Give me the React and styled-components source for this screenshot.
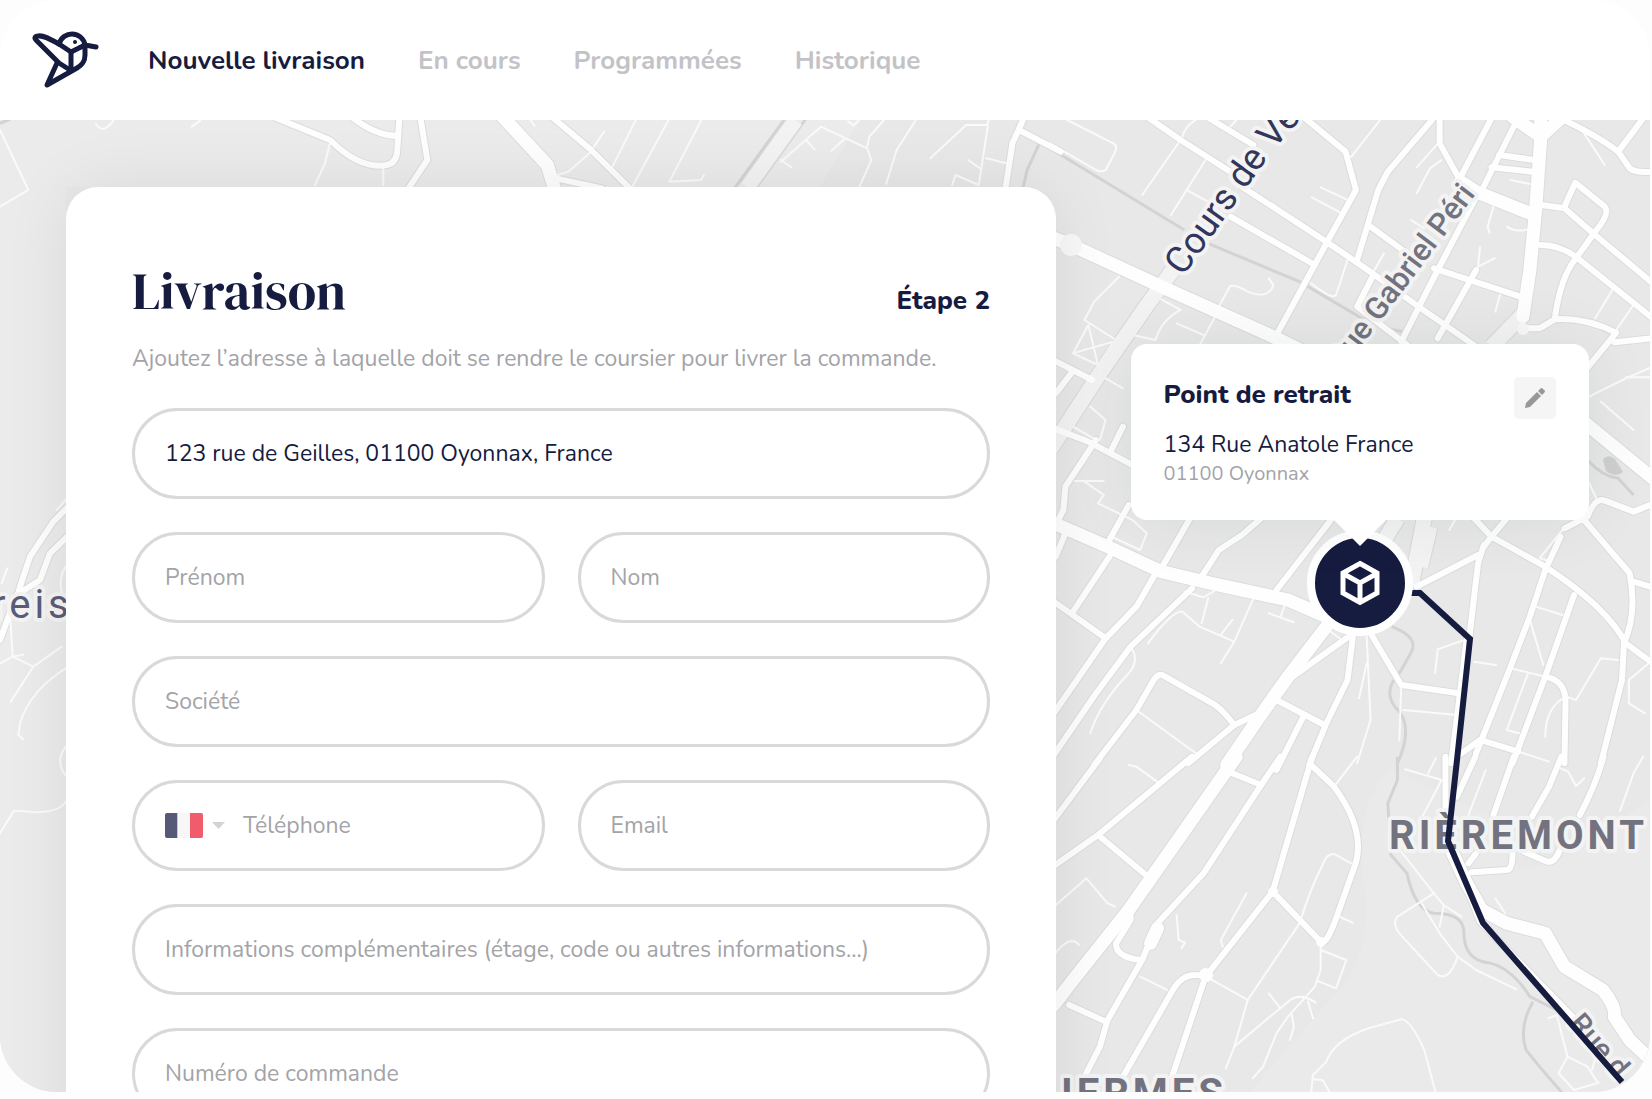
import React from "react";
import styled, { createGlobalStyle } from "styled-components";

const colors = {
  navy: "#161b40",
  muted: "#a3a3a8",
  navMuted: "#c3c3c7",
  border: "#d9d9d9",
  land: "#e8e8e8",
};

const GlobalStyle = createGlobalStyle`
  * {
    box-sizing: border-box;
  }

  body {
    margin: 0;
    background: #fdfdfd;
    color: ${colors.navy};
    font-family: Nunito, Lato, sans-serif;
    overflow: hidden;
  }
`;

const Frame = styled.div`
  display: flex;
  flex-direction: column;
  height: calc(100vh - 7px);
  margin-right: 2px;
  border-radius: 57px;
  background: #fff;
  overflow: hidden;
`;

const Header = styled.header`
  display: flex;
  align-items: center;
  gap: 48px;
  height: 120px;
  flex-shrink: 0;
  padding: 0 32px;
  background: #fff;
`;

const Nav = styled.nav`
  display: flex;
  gap: 53px;
  padding-top: 2px;
`;

const NavLink = styled.a`
  color: ${({ $active }) => ($active ? colors.navy : colors.navMuted)};
  font-size: 26px;
  font-weight: 700;
  line-height: 36px;
  text-decoration: none;
`;

const MapArea = styled.main`
  position: relative;
  flex: 1;
  min-height: 0;
  overflow: hidden;
  background: ${colors.land};
`;

const MapSvg = styled.svg`
  position: absolute;
  inset: 0;
  width: 100%;
  height: 100%;
  font-family: Roboto, sans-serif;
`;

const Card = styled.section`
  position: relative;
  width: 60%;
  margin: 67px 0 0 66px;
  padding: 74px 66px;
  border-radius: 32px 32px 0 0;
  background: #fff;
  box-shadow: 0 0 66px rgba(20, 24, 22, 0.08);
`;

const CardHeader = styled.div`
  display: flex;
  align-items: baseline;
  justify-content: space-between;
`;

const Title = styled.h1`
  margin: 0;
  font-family: "DM Serif Display", "Liberation Serif", serif;
  font-size: 52px;
  font-weight: 400;
  line-height: 60px;
`;

const Step = styled.span`
  font-size: 26px;
  font-weight: 800;
  line-height: 36px;
`;

const Intro = styled.p`
  margin: 20px 0 31px;
  color: ${colors.muted};
  font-size: 23px;
  line-height: 36px;
`;

const Form = styled.form`
  display: grid;
  grid-template-columns: repeat(2, minmax(0, 1fr));
  gap: 33px;
`;

const Field = styled.div`
  display: flex;
  align-items: center;
  gap: 18px;
  grid-column: ${({ $half }) => ($half ? "auto" : "1 / -1")};
  height: 91px;
  padding: 0 30px;
  border: 3px solid ${colors.border};
  border-radius: 46px;
`;

const Input = styled.input`
  flex: 1;
  min-width: 0;
  padding: 0;
  border: 0;
  outline: 0;
  background: transparent;
  color: ${colors.navy};
  font-family: inherit;
  font-size: 23px;
  line-height: 36px;

  &::placeholder {
    color: ${colors.muted};
    opacity: 1;
  }
`;

const CountryPicker = styled.div`
  position: relative;
  display: flex;
  align-items: center;
  gap: 9px;
`;

const CountrySelect = styled.select`
  position: absolute;
  inset: 0;
  width: 100%;
  opacity: 0;
  cursor: pointer;
`;

const PickupPin = styled.div`
  position: absolute;
  left: 82.4%;
  top: 224px;
  display: flex;
  flex-direction: column;
  align-items: center;
  gap: 10px;
  transform: translateX(-50%);
`;

const Popover = styled.article`
  position: relative;
  z-index: 1;
  display: flex;
  align-items: flex-start;
  justify-content: space-between;
  width: 458px;
  height: 176px;
  padding: 33px;
  border-radius: 16px;
  background: #fff;
  box-shadow: 0 0 66px rgba(20, 50, 40, 0.08);

  &::after {
    content: "";
    position: absolute;
    top: 100%;
    left: 50%;
    border: 26px solid transparent;
    border-top-color: #fff;
    border-bottom: 0;
    transform: translateX(-50%);
  }
`;

const PopoverTitle = styled.h2`
  margin: 0 0 16px;
  font-size: 26px;
  font-weight: 800;
  line-height: 36px;
`;

const Street = styled.p`
  margin: 0;
  font-size: 23px;
  line-height: 32px;
`;

const City = styled.p`
  margin: 0;
  color: ${colors.muted};
  font-size: 20px;
  line-height: 26px;
`;

const EditButton = styled.button`
  display: flex;
  align-items: center;
  justify-content: center;
  width: 42px;
  height: 42px;
  padding: 0;
  border: 0;
  border-radius: 5px;
  background: #f5f5f5;
  cursor: pointer;
`;

const Marker = styled.div`
  display: flex;
  align-items: center;
  justify-content: center;
  width: 106px;
  height: 106px;
  border: 8px solid #fff;
  border-radius: 50%;
  background: ${colors.navy};
`;

// Map data. Each tile keeps its own grid; widths are in screen pixels.
const tiles = [
  {
    id: "north-west",
    transform: "scale(.3333)",
    light: [],
    major: [],
    main: [
      "M830 355 L880 375 L990 420 Q1080 510 1160 495 Q1190 490 1192 450 L1198 355",
      "M1060 355 Q1130 408 1195 408",
    ],
    thin: [
      "M0 390 L85 570 L0 620",
      "M288 372 Q310 405 340 362",
      "M575 380 L600 362",
      "M990 430 L975 490 L945 555",
      "M1150 500 V555",
    ],
    rail: ["M0 370 L30 358"],
  },
  {
    id: "north",
    transform: "translate(400 110) scale(.4209 .3333)",
    light: ["M940 30 L825 232"],
    major: ["M240 15 L350 165 L368 240"],
    main: [
      "M48 20 L65 150 L20 235",
      "M360 20 L450 115 L550 240",
      "M370 205 L480 235",
      "M1480 30 L1455 100 L1438 240",
      "M1478 65 L1570 125",
    ],
    thin: [
      "M485 65 L450 130 L400 185 L375 195",
      "M562 25 L505 170",
      "M640 25 L550 235",
      "M718 25 L640 215 L715 210 L722 195",
      "M905 155 L1000 50 L1110 115 L1120 150 L1090 235",
      "M965 90 L985 118 M1058 85 L1025 122 M905 150 L930 172",
      "M1110 110 L1115 80 L1150 30 M1065 35 L1078 46 L1090 32",
      "M1228 25 L1180 120 L1155 222",
      "M1260 145 L1345 45 H1395 L1400 25 M1397 45 L1375 225 L1320 195 L1312 225",
      "M1393 145 L1440 160 M1350 150 L1378 175 M310 30 L320 48",
    ],
    rail: [
      "M915 25 L795 235",
      "M965 25 L845 235",
      "M1570 125 L1520 98 L1490 180 L1480 235",
    ],
  },
  {
    id: "west",
    transform: "translate(0 380) scale(.3333)",
    light: [],
    major: [],
    main: [
      "M210 375 L160 425 L90 530 L60 620 L55 640",
      "M210 462 L150 520 L120 600 L50 645 L0 780",
    ],
    thin: [
      "M22 565 L5 610",
      "M205 350 L170 390",
      "M30 700 L38 830 L0 850",
      "M38 830 L70 824 M38 830 L100 860 L32 965 M100 860 L185 800",
      "M205 860 Q90 930 60 1030 L55 1065 L70 1078",
      "M197 560 Q175 590 185 640",
      "M197 1100 Q160 1150 205 1195",
      "M0 1360 L42 1292 L110 1297 Q180 1295 197 1265",
    ],
    rail: [],
  },
  {
    id: "centre",
    transform: "translate(1050 110) scale(.3839 .3333)",
    light: ["M320 480 L250 590 L130 790 L0 1020", "M1235 610 L1150 710"],
    major: [
      "M0 380 L55 405 L290 530 L600 690 L720 760",
      "M1278 20 V90 L1265 300 L1250 480 L1232 620",
      "M1205 20 L1278 80 L1335 20",
      "M1070 215 L1110 245 L1255 312",
    ],
    main: [
      "M255 22 L340 90 L470 185 L500 230 L720 395 L840 490 L960 590 L1110 710",
      "M415 25 L530 105",
      "M470 320 L690 465",
      "M665 25 L770 125 L797 240 L720 400 L590 675",
      "M995 30 L880 185 L855 240 L800 450",
      "M1015 22 V100 L1070 215",
      "M1150 25 L1070 200",
      "M1210 45 L1125 240",
      "M1170 135 L1260 150 M1150 172 L1255 185",
      "M835 350 L930 430 M1000 475 L1225 560",
      "M1115 250 L1010 480 L915 695",
      "M1110 480 L1010 685",
      "M840 500 L800 590 L930 705",
      "M1330 25 Q1430 80 1480 125 L1510 175 Q1525 190 1570 185",
      "M1545 25 L1480 125",
      "M1280 285 L1340 295 L1420 375 L1570 520",
      "M1340 290 L1368 218 L1445 290 Q1460 310 1420 365 L1370 445 Q1330 500 1315 625",
      "M1278 405 Q1330 405 1375 445 L1570 625",
      "M1230 655 H1275 L1315 628 Q1390 620 1475 668 L1395 780",
      "M1470 697 L1570 685",
      "M0 745 L110 810 M55 790 L15 850",
    ],
    thin: [
      "M45 30 L165 100 Q178 108 168 130 L145 180 Q135 188 120 180 L0 100",
      "M340 90 L240 255 M345 80 Q350 50 385 25",
      "M405 150 L315 315 M355 240 L420 280",
      "M770 140 H785 L860 30",
      "M705 232 L785 275 M682 262 L760 310",
      "M1380 50 L1445 165",
      "M1465 540 L1420 625 M1520 585 L1475 660",
      "M1015 95 L955 172 M1020 150 L990 175 L955 250",
      "M1155 290 L1140 350 L1145 368 M1190 350 Q1210 368 1248 358 M1200 210 L1250 222",
      "M1120 412 L1115 470 L1158 445 M1172 555 L1160 605",
      "M775 450 L745 555 Q735 570 680 520",
      "M440 590 L468 530 Q480 520 515 545 Q570 570 582 525 L570 505",
      "M180 500 L115 575 L90 630 L172 690",
      "M100 645 L60 730 L125 765 L165 695 M100 645 L125 765 M60 730 L165 695",
      "M285 565 L340 600 Q290 630 275 690 L215 675",
      "M330 640 L400 675 M430 620 L390 705",
      "M145 805 L190 835 M105 890 L145 930 L130 990 M60 950 L120 990",
      "M1395 865 L1500 805 L1570 770 M1500 802 H1570 M1435 875 L1520 960",
      "M470 50 L485 30 M870 430 L835 500 M940 330 L975 355",
    ],
    rail: ["M0 115 L350 360", "M380 385 L650 515 L820 630", "M870 655 L920 665"],
  },
  {
    id: "east",
    transform: "translate(1050 430) scale(.3839 .3333)",
    light: ["M905 265 L860 350 M975 265 L940 470", "M990 290 L965 410"],
    major: [
      "M0 275 L150 350 L290 425 L420 460 L620 510 L710 555",
      "M740 560 L620 740 L540 870 L460 1005",
      "M1395 -20 L1570 145",
    ],
    main: [
      "M790 610 L620 750 L545 850 L480 885 L360 1000",
      "M790 610 L775 750 L720 880 L675 1005",
      "M835 610 L915 765 L1065 790",
      "M590 810 L715 885 M660 860 L590 1020",
      "M480 885 Q450 840 430 825 L300 740 Q285 725 270 750 L225 840 L115 1005",
      "M370 475 L210 650 L120 790 L10 975",
      "M270 440 L225 530 L145 625 L10 850",
      "M145 625 L10 515",
      "M60 545 L155 380 M15 380 L40 310",
      "M290 415 L365 265 M395 440 L440 360 L500 315 L550 265 M590 480 L735 265",
      "M10 -5 L100 35 L215 105",
      "M120 30 L40 170 L35 240 L15 285",
      "M205 225 L150 340 M160 60 L190 -10",
      "M955 470 L1115 375",
      "M1130 345 L1115 400 L1092 625",
      "M1105 265 L1150 320 L1130 350",
      "M1190 265 L1150 320 L1290 410 Q1450 530 1500 640 L1570 700",
      "M1330 320 L1290 420 L1250 560 L1200 710 L1110 970",
      "M1365 495 L1290 740 L1205 1000",
      "M1380 255 L1510 430 Q1530 550 1495 640 L1490 750 L1435 1000",
      "M1520 455 L1570 472",
      "M1340 295 L1400 260 Q1420 200 1445 212 L1520 245 L1570 222",
      "M1290 740 Q1340 750 1343 810 L1340 1000",
      "M1085 630 L1045 1000",
      "M1060 980 L1120 930 L1220 965",
    ],
    thin: [
      "M825 620 L835 870 L800 1000 M825 700 L805 805",
      "M225 840 L380 970",
      "M350 485 L400 502 L432 480 M412 505 L395 580",
      "M255 640 Q320 540 345 545 L390 590 L480 635",
      "M475 570 L445 615 M530 505 L480 635 L445 700",
      "M570 550 L635 577 M612 525 L600 562",
      "M210 650 Q235 690 205 730 Q130 820 105 910",
      "M65 153 H140 M90 155 L140 195 L125 220 L215 270 L252 310 L235 360 L160 320",
      "M1075 632 L1010 658 L1003 730 M1105 695 L1162 705",
      "M1265 530 L1335 555 M1250 570 L1285 705 M1200 715 L1290 740",
      "M1335 300 L1275 385 L1300 392 L1328 330",
      "M1480 690 L1435 685 L1370 810 L1345 800 Q1290 830 1290 920",
      "M1570 690 L1508 750 V820 L1550 850",
      "M1245 730 L1190 900 L1222 910 M1220 965 L1300 995",
      "M915 765 L910 930 M920 840 L1060 855 M725 600 L760 630",
      "M1405 160 L1425 210 M1040 300 L1055 270",
    ],
    rail: [
      "M890 590 Q960 620 942 665 L910 730 Q860 790 910 845 Q945 900 905 1000",
      "M1400 90 Q1440 140 1480 145 L1520 195",
    ],
  },
  {
    id: "south-east",
    transform: "translate(1050 760) scale(.3839 .3333)",
    light: [],
    major: [
      "M485 -10 L205 450 L60 660 L10 735",
      "M1035 245 L1085 370 L1125 450 L1190 490 L1290 520 L1340 620 L1440 690 Q1475 740 1470 770 L1510 840 L1570 905",
      "M280 505 L262 550",
    ],
    main: [
      "M10 180 L130 -5",
      "M10 318 L125 225 L370 -10 M125 225 L245 340",
      "M465 35 L550 75",
      "M600 -10 L550 75 L400 340 L280 490 L240 600 L150 780 L130 860 L90 950",
      "M210 440 V480 L172 550 Q170 590 235 600",
      "M50 735 L145 785",
      "M683 -10 L580 395 L405 650 Q350 630 320 690 L190 950 M405 650 L318 950",
      "M680 15 L740 80 Q830 220 790 330 L750 460 Q720 560 705 545 L580 395",
      "M1030 -10 V240",
      "M1108 -10 L1060 110 M1208 -10 L1155 165",
      "M1332 -10 L1300 80 L1255 170 M1442 -10 Q1420 80 1380 165",
      "M1090 310 L1110 280 M1098 337 L1190 330 Q1205 330 1205 275",
      "M1235 275 L1295 305 Q1315 310 1330 265",
      "M1037 240 L1120 485 L1395 810",
    ],
    thin: [
      "M800 -10 L740 80 M205 15 L225 20 L285 70",
      "M10 440 L95 355 L150 430 L170 440 M10 585 Q55 520 75 555",
      "M330 465 L335 540 L352 548 L342 565",
      "M512 400 L445 540 L450 560 M235 650 L305 690 M415 655 L515 720",
      "M785 310 L740 282 Q720 280 710 315 Q680 380 650 490 L515 720 L480 860 L458 925",
      "M750 468 L788 488",
      "M705 555 V630 L690 680 L620 770 L590 820 L555 920 L528 955",
      "M705 570 L772 600 L745 685 L695 662",
      "M480 860 L620 725 Q650 695 692 728 M570 700 L600 745 M672 725 L685 775 M630 765 L635 800 L625 840",
      "M680 1000 L685 945 L720 905 Q740 840 830 805 L915 778 Q940 780 975 870 L1005 1000",
      "M685 958 L710 960 L730 1000",
      "M925 28 L1020 60 L970 170 M1005 -5 L985 40 M1135 30 L1090 165",
      "M915 275 L1000 400 L1025 435 L1072 470",
      "M1000 400 L905 470 Q890 490 910 520 L1010 645 Q1040 665 1062 590 L1015 520 L968 430",
      "M1025 440 L1015 500 M1062 590 L1110 630 L1215 688",
      "M1330 25 L1350 35 L1370 78 L1392 55 M1545 -10 L1520 40 L1485 152",
      "M1160 415 L1185 460 M1298 775 L1320 765 L1348 890 L1325 940 L1365 990 L1430 968",
      "M1348 890 L1400 920 L1425 965 M1420 895 L1412 930",
    ],
    rail: [
      "M905 -10 V60 L880 130 L888 285 L930 340 Q950 450 1000 460 Q1080 460 1078 520 Q1080 600 1140 608 Q1200 620 1250 710 L1320 750",
      "M1258 725 Q1220 800 1240 870 L1275 920 L1335 1000",
    ],
  },
];

const roadWidths = { light: 15, major: 13, main: 6, thin: 2 };

const Roads = ({ kind, stroke, extra = 0 }) =>
  tiles.map((tile) => (
    <g
      key={tile.id}
      transform={tile.transform}
      fill="none"
      stroke={stroke}
      strokeWidth={roadWidths[kind] + extra}
      strokeLinecap={kind === "light" ? "butt" : "round"}
      strokeLinejoin="round"
    >
      {tile[kind].map((d) => (
        <path key={d} d={d} vectorEffect="non-scaling-stroke" />
      ))}
    </g>
  ));

const CityMap = () => (
  <MapSvg viewBox="0 120 1650 972" preserveAspectRatio="xMidYMin slice" aria-hidden="true">
    <path d="M0 120 H860 L820 187 H66 V1092 H0 Z" fill="#ebebeb" />
    <path d="M1392 770 Q1350 800 1366 900 Q1370 960 1330 1000 L1250 1092 H1650 V800 L1560 860 L1520 870 L1500 820 Z" fill="#eaeaea" />

    <g fill="none" stroke="#d3d3d4" strokeWidth="3">
      {tiles.map((tile) => (
        <g key={tile.id} transform={tile.transform}>
          {tile.rail.map((d) => (
            <path key={d} d={d} vectorEffect="non-scaling-stroke" />
          ))}
        </g>
      ))}
    </g>
    <path d="M1603 460 Q1608 453 1615 459 L1623 472 Q1616 478 1606 471 Z" fill="#cfcfd0" />

    <Roads kind="light" stroke="#d8d9d9" extra={2} />
    <Roads kind="main" stroke="#dbdcdc" extra={2} />
    <Roads kind="major" stroke="#dbdcdc" extra={2} />
    <Roads kind="thin" stroke="#fafafa" />
    <Roads kind="light" stroke="#f3f3f3" />
    <Roads kind="main" stroke="#fefefe" />
    <Roads kind="major" stroke="#fefefe" />
    <circle cx="1071" cy="245" r="11" fill="#f8f8f8" />
    <circle cx="1523" cy="329" r="6" fill="#f8f8f8" />
    <circle cx="1206" cy="975" r="7" fill="#fefefe" />
    <circle cx="1321" cy="942" r="5" fill="#fefefe" />
    <circle cx="1273" cy="892" r="5" fill="#fefefe" />

    <defs>
      <path id="cours" d="M1183 277 L1260 169 Q1276 145 1308 112" />
    </defs>
    <g stroke="#f3f3f3" strokeWidth="8" strokeLinejoin="round" paintOrder="stroke" fill="#73737f" fontWeight="500">
      <text fontSize="37" fontWeight="400" fill="#32365a">
        <textPath href="#cours">Cours de Ve</textPath>
      </text>
      <text fontSize="31" textAnchor="end" transform="translate(1476 194) rotate(-53)">
        Rue Gabriel Péri
      </text>
      <text x="-8" y="618" fontSize="40" fontWeight="400" letterSpacing="4" fill="#5b5d78">
        reis
      </text>
      <text x="1389" y="849" fontSize="40" fontWeight="700" letterSpacing="4">
        RIÈREMONT
      </text>
      <text x="1061" y="1107" fontSize="40" fontWeight="700" letterSpacing="4">
        IERMES
      </text>
      <text fontSize="29" transform="translate(1568 1024) rotate(49)">
        Rue d
      </text>
    </g>

    <path
      d="M1400 593 H1420 L1470 639 L1457 760 L1448 841 L1483 923 L1622 1082"
      fill="none"
      stroke={colors.navy}
      strokeWidth="6"
    />
  </MapSvg>
);

const Logo = () => (
  <svg width="68" height="58" viewBox="0 0 68 58" fill="none" stroke={colors.navy} strokeWidth="5" strokeLinecap="round" strokeLinejoin="round" aria-hidden="true">
    <path d="M27 13 C18 8 12 4 6 5 C3 5 2 7 4 9 L27 32 L38 39" />
    <path d="M27 13 L39 21 L53 14 V24 C53 31 50 34 45 37 L15 54 L25 32" />
    <path d="M27 13 C29 6 35 3 40 3 C47 3 52 8 53 14 L64 16" />
    <path d="M39 21 V39" />
    <circle cx="43" cy="11" r="2" fill={colors.navy} stroke="none" />
  </svg>
);

const FrenchFlag = () => (
  <svg width="38" height="25" viewBox="0 0 38 25" aria-hidden="true">
    <clipPath id="flag">
      <rect width="38" height="25" rx="2" />
    </clipPath>
    <g clipPath="url(#flag)">
      <rect width="38" height="25" fill="#f7f7f7" />
      <rect width="12" height="25" fill="#565a78" />
      <rect x="12" width="1" height="25" fill="#c9c9cf" />
      <rect x="25" width="13" height="25" fill="#f05c6c" />
    </g>
  </svg>
);

const navItems = ["Nouvelle livraison", "En cours", "Programmées", "Historique"];

const App = () => (
  <>
    <GlobalStyle />
    <Frame>
      <Header>
        <Logo />
        <Nav>
          {navItems.map((item, index) => (
            <NavLink key={item} href="#" $active={index === 0}>
              {item}
            </NavLink>
          ))}
        </Nav>
      </Header>

      <MapArea>
        <CityMap />

        <PickupPin>
          <Popover>
            <div>
              <PopoverTitle>Point de retrait</PopoverTitle>
              <Street>134 Rue Anatole France</Street>
              <City>01100 Oyonnax</City>
            </div>
            <EditButton type="button" aria-label="Modifier">
              <svg width="22" height="22" viewBox="0 0 22 22" fill="#97979c" aria-hidden="true">
                <path d="M1 21 L2 16 L13 5 L17 9 L6 20 Z" />
                <path d="M14 4 L16 2 Q18 0 19 2 L20 3 Q22 4 20 6 L18 8 Z" />
              </svg>
            </EditButton>
          </Popover>
          <Marker>
            <svg width="44" height="48" viewBox="0 0 44 48" fill="none" stroke="#fff" strokeWidth="5" aria-hidden="true">
              <path d="M22 4.5 L39 14 V34 L22 43.5 L5 34 V14 Z" />
              <path d="M5 14.5 L22 24 L39 14.5 M22 24 V43" />
            </svg>
          </Marker>
        </PickupPin>

        <Card>
          <CardHeader>
            <Title>Livraison</Title>
            <Step>Étape 2</Step>
          </CardHeader>
          <Intro>Ajoutez l’adresse à laquelle doit se rendre le coursier pour livrer la commande.</Intro>
          <Form>
            <Field>
              <Input aria-label="Adresse" defaultValue="123 rue de Geilles, 01100 Oyonnax, France" />
            </Field>
            <Field $half>
              <Input aria-label="Prénom" placeholder="Prénom" />
            </Field>
            <Field $half>
              <Input aria-label="Nom" placeholder="Nom" />
            </Field>
            <Field>
              <Input aria-label="Société" placeholder="Société" />
            </Field>
            <Field $half>
              <CountryPicker>
                <FrenchFlag />
                <svg width="13" height="7" viewBox="0 0 13 7" fill="#d3d3d5" aria-hidden="true">
                  <path d="M0 0 H13 L6.5 7 Z" />
                </svg>
                <CountrySelect aria-label="Indicatif" defaultValue="FR">
                  <option value="FR">France</option>
                </CountrySelect>
              </CountryPicker>
              <Input type="tel" aria-label="Téléphone" placeholder="Téléphone" />
            </Field>
            <Field $half>
              <Input type="email" aria-label="Email" placeholder="Email" />
            </Field>
            <Field>
              <Input
                aria-label="Informations complémentaires"
                placeholder="Informations complémentaires (étage, code ou autres informations...)"
              />
            </Field>
            <Field>
              <Input aria-label="Numéro de commande" placeholder="Numéro de commande" />
            </Field>
          </Form>
        </Card>
      </MapArea>
    </Frame>
  </>
);

export default App;
